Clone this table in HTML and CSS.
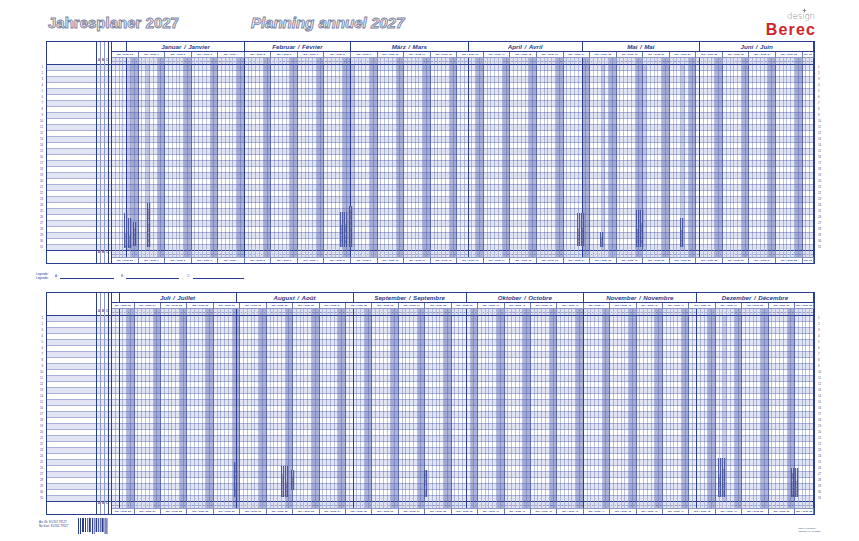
FILE: index.html
```html
<!DOCTYPE html>
<html lang="de">
<head>
<meta charset="utf-8">
<title>Jahresplaner 2027</title>
<link rel="stylesheet" href="styles.css">
</head>
<body>
<div class="page">
  <header class="top">
    <h1 class="title">Jahresplaner 2027</h1>
    <h1 class="title fr">Planning annuel 2027</h1>
    <div class="logo">
      <div class="orn-row">
        <svg class="orn" viewBox="0 0 10 10" width="5" height="5"><path d="M5 0 L6.2 3.8 L10 5 L6.2 6.2 L5 10 L3.8 6.2 L0 5 L3.8 3.8 Z" fill="#7f8592"/></svg>
      </div>
      <span class="design">design</span>
      <span class="berec">Berec</span>
    </div>
  </header>

  <section class="half">
    <div class="nums left" id="n1l"></div>
    <div class="box" id="b1"></div>
    <div class="nums right" id="n1r"></div>
  </section>

  <div class="legend">
    <div class="leg-label"><span>Legende:</span><span>Légende:</span></div>
    <div class="leg-item a"><span class="leg-key">A :</span><span class="leg-line"></span></div>
    <div class="leg-item b"><span class="leg-key">B :</span><span class="leg-line"></span></div>
    <div class="leg-item c"><span class="leg-key">C :</span><span class="leg-line"></span></div>
  </div>

  <section class="half">
    <div class="nums left" id="n2l"></div>
    <div class="box" id="b2"></div>
    <div class="nums right" id="n2r"></div>
  </section>

  <footer class="foot">
    <div class="artnr"><span>Art.-Nr. 8 0702 79127</span><span>No d'art. 8 0702 79127</span></div>
    <svg class="barcode" viewBox="0 0 30 16" width="30" height="16">
      <g fill="#2c3d8f">
        <rect x="0" y="0" width="1" height="16"/>
        <rect x="2" y="0" width="1" height="16"/>
        <rect x="4" y="0" width="2" height="14"/>
        <rect x="7" y="0" width="1" height="14"/>
        <rect x="9" y="0" width="0.7" height="14"/>
        <rect x="10.8" y="0" width="2" height="14"/>
        <rect x="14" y="0" width="1" height="16"/>
        <rect x="15.8" y="0" width="0.8" height="16"/>
        <rect x="17.6" y="0" width="1.6" height="14"/>
        <rect x="20.2" y="0" width="1" height="14"/>
        <rect x="22" y="0" width="0.7" height="14"/>
        <rect x="23.6" y="0" width="2" height="14"/>
        <rect x="26.6" y="0" width="1" height="16"/>
        <rect x="28.4" y="0" width="1" height="16"/>
      </g>
    </svg>
    <div class="made"><span>Made in Germany</span><span>Fabriqué en Allemagne</span></div>
  </footer>
</div>
<script src="script.js"></script>
</body>
</html>
```

FILE: styles.css
```css
* { box-sizing: border-box; margin: 0; padding: 0; }
body {
  margin: 0;
  background: #fff;
  font-family: "Liberation Sans", Arial, sans-serif;
  color: #2c3d8f;
  width: 859px;
  height: 541px;
  overflow: hidden;
}
.page { display: flex; flex-direction: column; width: 859px; height: 541px; }

/* ---------- header ---------- */
.top { height: 40.7px; flex: none; display: flex; align-items: flex-start; padding-left: 48px; }
.title {
  font-size: 15px;
  font-weight: 700;
  line-height: 17px;
  margin-top: 14px;
  color: #f3f4f8;
  -webkit-text-stroke: 0.9px #7a83a3;
  white-space: nowrap;
}
.title.fr { font-style: italic; margin-left: 72px; }
.logo { margin-left: auto; margin-right: 44px; margin-top: 8px; display: flex; flex-direction: column; align-items: flex-end; }
.orn-row { display: flex; justify-content: flex-end; padding-right: 8.5px; height: 5px; margin-bottom: -2px; }
.orn { display: block; }
.design { font-family: "DejaVu Sans", sans-serif; font-weight: 200; font-size: 8.5px; line-height: 10px; color: #858a96; }
.berec { font-size: 16px; font-weight: 700; line-height: 18.5px; letter-spacing: 1.2px; margin-right: -1.2px; color: #d0252b; }

/* ---------- half planner ---------- */
.half { height: 223.3px; flex: none; display: flex; align-items: flex-start; padding-left: 34px; }
.nums { width: 12px; padding-top: 23.7px; display: grid; grid-template-rows: repeat(31, 6px); font-size: 2.8px; line-height: 6px; color: #3a4a92; }
.nums.left { text-align: right; padding-right: 3px; }
.nums.right { width: 14px; text-align: left; padding-left: 3px; }

.box {
  --n: 185;
  width: 769px;
  height: 223.3px;
  border: 1px solid #2c3d8f;
  position: relative;
  display: grid;
  grid-template-columns: 50px 4px 4px 4px 3px repeat(var(--n), 1fr);
  grid-template-rows: 10.5px 5.5px 6.7px repeat(31, 6px) 6.3px 6.3px;
  background: #fff;
  overflow: hidden;
}

.rows {
  grid-column: 1 / -1;
  grid-row: 4 / 35;
  border-top: 1px solid #2c3d8f;
  background: repeating-linear-gradient(to bottom,
    #e1e4f2 0, #e1e4f2 5.3px, #a9b1d6 5.3px, #a9b1d6 6px,
    #ffffff 6px, #ffffff 11.3px, #a9b1d6 11.3px, #a9b1d6 12px);
}
.foot-layer { grid-column: 1 / -1; grid-row: 35 / 37; border-top: 1px solid #2c3d8f; background: #fff; }

.vline { grid-row: 1 / -1; }
.label-line { grid-column: 1; border-right: 1px solid #2c3d8f; }
.c2 { grid-column: 2; border-right: 1px solid #8e98c8; }
.c3 { grid-column: 3; border-right: 1px solid #8e98c8; }
.c4 { grid-column: 4; border-right: 1px solid #2c3d8f; }
.c5 { grid-column: 5; border-right: 1.4px solid #2c3d8f; }

.abc { font-size: 2.6px; text-align: center; color: #2c3d8f; font-weight: 700; }
.abc-h { grid-row: 3; line-height: 6.7px; }
.abc-f { grid-row: 35; line-height: 6.3px; }
.abc.c2n { grid-column: 2; }
.abc.c3n { grid-column: 3; }
.abc.c4n { grid-column: 4; }

/* day columns */
.d { grid-row: 4 / 35; border-right: 1px solid rgba(70, 85, 160, 0.36); }
.d.hol { background: rgba(75, 90, 170, 0.26); }
.d.we { background: rgba(75, 90, 170, 0.44); }
.d.sun { border-right-color: rgba(50, 65, 150, 0.6); }
.d.me { border-right: 1px solid #2c3d8f; }

.dh, .df {
  font-size: 2.2px;
  text-align: center;
  overflow: hidden;
  white-space: nowrap;
  background: #dfe2f0;
  border-right: 1px solid rgba(70, 85, 160, 0.3);
  color: #2c3d8f;
}
.dh { grid-row: 3; line-height: 6.7px; }
.df { grid-row: 35; line-height: 6.3px; border-top: 1px solid #2c3d8f; }
.dh.we, .df.we { background: #aab1d6; }
.dh.me, .df.me { border-right: 1px solid #2c3d8f; }

.mo {
  grid-row: 1;
  display: flex;
  align-items: center;
  justify-content: center;
  gap: 2.5px;
  font-size: 6.2px;
  font-weight: 700;
  font-style: italic;
  white-space: nowrap;
  color: #2c3d8f;
  border-right: 1px solid #2c3d8f;
  border-bottom: 1px solid #2c3d8f;
  background: #fff;
}
.wk, .wf {
  font-size: 2.5px;
  font-weight: 700;
  text-align: center;
  white-space: nowrap;
  overflow: hidden;
  border-right: 1px solid #6d79b3;
  color: #2c3d8f;
  background: #fff;
}
.wk { grid-row: 2; line-height: 5px; border-bottom: 1px solid #8e98c8; }
.wf { grid-row: 36; line-height: 6.3px; border-top: 1px solid #8e98c8; }

.note {
  position: absolute;
  width: 3.2px;
  writing-mode: vertical-rl;
  transform: rotate(180deg);
  font-size: 2.6px;
  font-weight: 700;
  line-height: 3px;
  white-space: nowrap;
  overflow: hidden;
  color: #24347f;
  background: rgba(255, 255, 255, 0.55);
  border-left: 0.5px solid #2c3d8f;
  border-right: 0.5px solid #2c3d8f;
}

/* ---------- legend ---------- */
.legend { height: 27.7px; flex: none; display: flex; align-items: flex-start; padding-left: 36px; padding-top: 9.5px; }
.leg-label { display: flex; flex-direction: column; font-size: 3px; line-height: 3.4px; width: 10px; }
.leg-item { display: flex; align-items: flex-end; font-size: 3px; line-height: 3.4px; margin-top: 2px; }
.leg-key { margin-right: 1.5px; }
.leg-line { display: block; height: 3px; border-bottom: 0.7px solid #2c3d8f; }
.leg-item.a { margin-left: 9px; }
.leg-item.a .leg-line { width: 54px; }
.leg-item.b { margin-left: 7px; }
.leg-item.b .leg-line { width: 53px; }
.leg-item.c { margin-left: 8px; }
.leg-item.c .leg-line { width: 51px; }

/* ---------- footer ---------- */
.foot { flex: 1; display: flex; align-items: flex-start; padding-left: 39px; }
.artnr { display: flex; flex-direction: column; font-size: 2.9px; line-height: 3.6px; margin-top: 6.5px; width: 36px; white-space: nowrap; }
.barcode { display: block; margin-top: 3px; margin-left: 3px; }
.made { margin-left: auto; margin-right: 38px; margin-top: 12px; display: flex; flex-direction: column; font-size: 2.2px; line-height: 2.8px; white-space: nowrap; }
```

FILE: script.js
```js
(function () {
  var MONTHS = ['Januar|Janvier', 'Februar|Février', 'März|Mars', 'April|Avril', 'Mai|Mai', 'Juni|Juin',
    'Juli|Juillet', 'August|Août', 'September|Septembre', 'Oktober|Octobre', 'November|Novembre', 'Dezember|Décembre'];
  var HOL = ['2027-01-01', '2027-01-02', '2027-01-06', '2027-03-01', '2027-05-06', '2027-05-17',
    '2027-05-27', '2027-08-01', '2027-12-08'];

  function pad(n) { return n < 10 ? '0' + n : '' + n; }
  function key(d) { return d.getUTCFullYear() + '-' + pad(d.getUTCMonth() + 1) + '-' + pad(d.getUTCDate()); }
  function addDays(d, n) { return new Date(d.getTime() + n * 86400000); }
  function isoWeek(d) {
    var t = new Date(Date.UTC(d.getUTCFullYear(), d.getUTCMonth(), d.getUTCDate()));
    var day = t.getUTCDay() || 7;
    t.setUTCDate(t.getUTCDate() + 4 - day);
    var y0 = new Date(Date.UTC(t.getUTCFullYear(), 0, 1));
    return Math.ceil(((t - y0) / 86400000 + 1) / 7);
  }
  function mk(parent, cls, text, col) {
    var e = document.createElement('div');
    e.className = cls;
    if (text !== undefined && text !== '') e.textContent = text;
    if (col) e.style.gridColumn = col;
    parent.appendChild(e);
    return e;
  }

  function build(id, start, pre, total, notes) {
    var box = document.getElementById(id);
    box.style.setProperty('--n', total);
    mk(box, 'rows');
    mk(box, 'foot-layer');
    mk(box, 'vline label-line');
    mk(box, 'vline c2');
    mk(box, 'vline c3');
    mk(box, 'vline c4');
    mk(box, 'vline c5');
    ['A', 'B', 'C'].forEach(function (t, k) {
      var c = ['c2n', 'c3n', 'c4n'][k];
      mk(box, 'abc abc-h ' + c, t);
      mk(box, 'abc abc-f ' + c, t);
    });

    var i, d, nx, dow, c, col;
    for (i = 0; i < total; i++) {
      d = addDays(start, i);
      nx = addDays(start, i + 1);
      dow = (d.getUTCDay() + 6) % 7;
      c = '';
      if (dow >= 5) c += ' we';
      if (HOL.indexOf(key(d)) >= 0) c += ' hol';
      if (dow === 6) c += ' sun';
      if (i === pre - 1 || (i >= pre && nx.getUTCMonth() !== d.getUTCMonth())) c += ' me';
      col = String(6 + i);
      mk(box, 'd' + c, '', col);
      mk(box, 'dh' + c, String(d.getUTCDate()), col);
      mk(box, 'df' + c, String(d.getUTCDate()), col);
    }

    if (pre > 0) mk(box, 'mo pre', '', '6 / span ' + pre);
    i = pre;
    while (i < total) {
      var m = addDays(start, i).getUTCMonth(), s = i;
      while (i < total && addDays(start, i).getUTCMonth() === m) i++;
      var e = mk(box, 'mo', '', (6 + s) + ' / span ' + (i - s));
      var p = MONTHS[m].split('|');
      [p[0], '/', p[1]].forEach(function (t) {
        var sp = document.createElement('span');
        sp.textContent = t;
        e.appendChild(sp);
      });
    }

    i = 0;
    while (i < total) {
      var ws = i, w = isoWeek(addDays(start, i));
      i++;
      while (i < total && addDays(start, i).getUTCDay() !== 1) i++;
      var len = i - ws;
      var label = len >= 4 ? 'Wo. / Sem. ' + w : 'Wo. ' + w;
      mk(box, 'wk', label, (6 + ws) + ' / span ' + len);
      mk(box, 'wf', label, (6 + ws) + ' / span ' + len);
    }

    var r = box.getBoundingClientRect();
    var ox = r.left + 1, oy = r.top + 1;
    notes.forEach(function (n) {
      var e = mk(box, 'note', n[3]);
      e.style.left = (n[0] - ox) + 'px';
      e.style.top = (n[1] - oy) + 'px';
      e.style.height = (n[2] - n[1]) + 'px';
    });
  }

  function nums(id) {
    var el = document.getElementById(id);
    for (var k = 1; k <= 31; k++) {
      var e = document.createElement('div');
      e.textContent = k;
      el.appendChild(e);
    }
  }
  ['n1l', 'n1r', 'n2l', 'n2r'].forEach(nums);

  build('b1', new Date(Date.UTC(2026, 11, 28)), 4, 185, [
    [124, 213, 248, 'Neujahrstag'],
    [127.5, 218, 248, 'Nouvel An'],
    [133, 222, 246, 'Berchtoldstag'],
    [147, 203, 247, 'Heilige Drei Könige / Épiphanie'],
    [340, 212, 247, 'Fasnachtsmontag'],
    [343.5, 212, 247, 'Lundi de Carnaval'],
    [349, 206, 247, 'Instauration de la République'],
    [577, 213, 246, 'Tag der Arbeit'],
    [580.5, 213, 246, 'Fête du Travail'],
    [600, 232, 247, 'Auffahrt'],
    [636, 210, 247, 'Pfingstmontag'],
    [639.5, 210, 247, 'Lundi de Pentecôte'],
    [680, 218, 247, 'Fronleichnam']
  ]);
  build('b2', new Date(Date.UTC(2027, 5, 29)), 2, 186, [
    [234, 462, 497, 'Bundesfeier / Fête nationale'],
    [281, 466, 497, 'Mariä Himmelfahrt'],
    [284.5, 466, 497, 'Assomption'],
    [291, 470, 490, 'Ferragosto'],
    [424, 470, 497, 'Bettag / Jeûne fédéral'],
    [718, 458, 497, 'Mariä Empfängnis'],
    [721.5, 458, 497, 'Immaculée Conception'],
    [791, 468, 497, 'Weihnachten / Noël'],
    [794.5, 468, 497, 'Stephanstag']
  ]);
})();
```
